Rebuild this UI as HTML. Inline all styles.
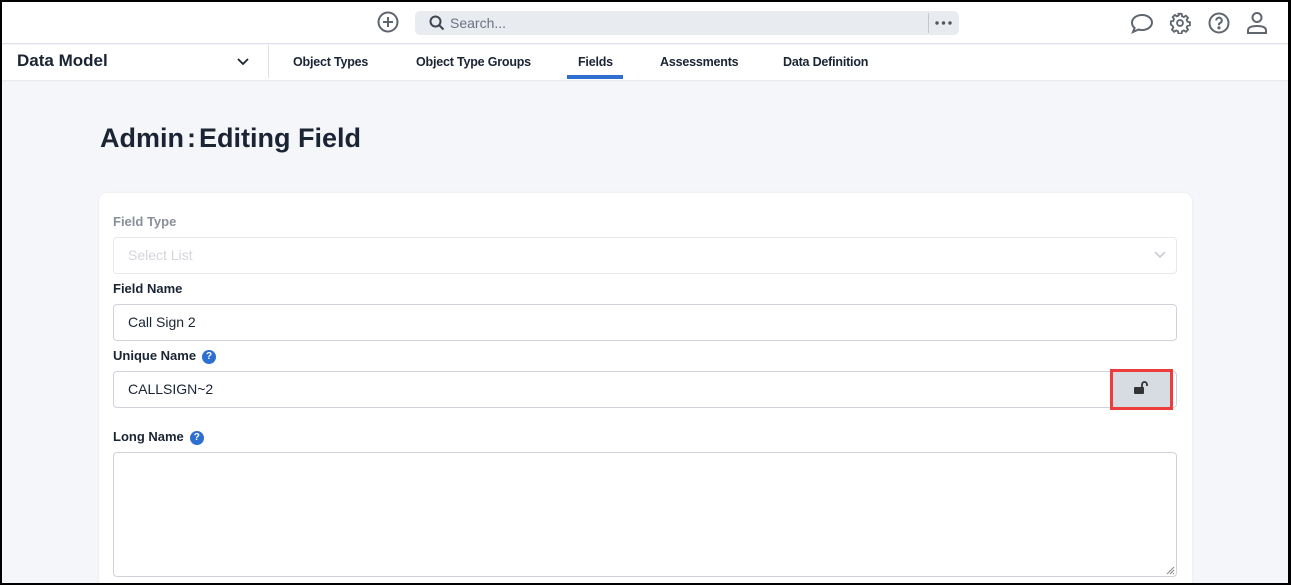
<!DOCTYPE html>
<html><head><style>
*{box-sizing:border-box;margin:0;padding:0}
body{width:1291px;height:585px;overflow:hidden;background:#000;font-family:"Liberation Sans",sans-serif;position:relative}
.frame{position:absolute;left:2px;top:2px;width:1286px;height:581px;background:#f5f6fa;overflow:hidden}
.top{position:absolute;left:0;top:0;width:100%;height:42px;background:#fff;border-bottom:1px solid #dfe1e5}
.search{position:absolute;left:413px;top:9px;width:544px;height:24px;background:#e8ebf0;border-radius:5px}
.search span{position:absolute;left:35px;top:4px;font-size:14px;color:#6b7280}
.nav{position:absolute;left:0;top:43px;width:100%;height:35px;background:#fff;box-shadow:0 1px 2px rgba(0,0,0,.06)}
.nav .t{position:absolute;top:10px;font-size:12.5px;font-weight:bold;color:#1a2433;letter-spacing:-.2px}
.card{position:absolute;left:97px;top:191px;width:1093px;height:400px;background:#fff;border-radius:8px;box-shadow:0 0 2px rgba(0,0,0,.08)}
.lbl{position:absolute;left:14px;font-size:13px;font-weight:bold;color:#1a2433}
.inp{position:absolute;left:14px;width:1064px;border:1px solid #cfd3d9;border-radius:4px;font-size:14px;color:#1a2433;padding-left:14px}
.q{display:inline-block;width:14px;height:14px;border-radius:50%;background:#2f6fd0;color:#fff;font-size:10px;text-align:center;line-height:14px;vertical-align:1px;margin-left:6px}
</style></head><body><div class="frame">
<div class="top">
<svg style="position:absolute;left:375px;top:9px" width="22" height="22" viewBox="0 0 22 22" fill="none" stroke="#5f6670" stroke-width="2"><circle cx="11" cy="11" r="9.5"/><path d="M11 6v10M6 11h10"/></svg>
<div class="search"><svg style="position:absolute;left:14px;top:4px" width="16" height="16" viewBox="0 0 16 16" fill="none" stroke="#3d4450" stroke-width="2"><circle cx="6.5" cy="6.5" r="5"/><path d="M10 10l4.5 4.5"/></svg><span>Search...</span>
<div style="position:absolute;left:513px;top:2px;width:1px;height:20px;background:#c4c8ce"></div>
<svg style="position:absolute;left:520px;top:10px" width="18" height="4" viewBox="0 0 18 4" fill="#555"><circle cx="2" cy="2" r="1.7"/><circle cx="8.5" cy="2" r="1.7"/><circle cx="15" cy="2" r="1.7"/></svg></div>
<svg style="position:absolute;left:1128px;top:11px" width="24" height="22" viewBox="0 0 24 22" fill="none" stroke="#5f6670" stroke-width="2"><path d="M12 2c5.5 0 10 3.4 10 7.5S17.5 17 12 17c-1.3 0-2.5-.2-3.6-.5L3 19l1.6-4C3 13.7 2 11.7 2 9.5 2 5.4 6.5 2 12 2z"/></svg>
<svg style="position:absolute;left:1167px;top:10px" width="22" height="22" viewBox="0 0 24 24" fill="none" stroke="#5f6670" stroke-width="2"><circle cx="12" cy="12" r="3.2"/><path d="M10.3 2h3.4l.5 2.6 2 .9 2.2-1.5 2.4 2.4-1.5 2.2.9 2 2.6.5v3.4l-2.6.5-.9 2 1.5 2.2-2.4 2.4-2.2-1.5-2 .9-.5 2.6h-3.4l-.5-2.6-2-.9-2.2 1.5-2.4-2.4 1.5-2.2-.9-2L2 13.7v-3.4l2.6-.5.9-2L4 5.6 6.4 3.2l2.2 1.5 2-.9z"/></svg>
<svg style="position:absolute;left:1206px;top:10px" width="22" height="22" viewBox="0 0 22 22" fill="none" stroke="#5f6670" stroke-width="2"><circle cx="11" cy="11" r="9.5"/><path d="M8.2 8.5a2.8 2.8 0 1 1 3.8 2.6c-.7.3-1 .8-1 1.5v.6"/><circle cx="11" cy="15.8" r=".6" fill="#5f6670"/></svg>
<svg style="position:absolute;left:1244px;top:9px" width="22" height="24" viewBox="0 0 22 24" fill="none" stroke="#5f6670" stroke-width="2"><circle cx="11" cy="6.5" r="4.5"/><path d="M2 22v-2.5C2 16.5 5 15 11 15s9 1.5 9 4.5V22z"/></svg>
</div>
<div class="nav">
<div style="position:absolute;left:15px;top:6px;font-size:17px;font-weight:bold;color:#1a2433">Data Model</div>
<svg style="position:absolute;left:234px;top:12px" width="14" height="10" viewBox="0 0 14 10" fill="none" stroke="#1a2433" stroke-width="1.8"><path d="M2 2l5 5 5-5"/></svg>
<div style="position:absolute;left:266px;top:0;width:1px;height:33px;background:#dfe1e5"></div>
<div class="t" style="left:291px">Object Types</div>
<div class="t" style="left:414px">Object Type Groups</div>
<div class="t" style="left:576px">Fields</div>
<div style="position:absolute;left:565px;top:30px;width:56px;height:4px;background:#2f6fd0"></div>
<div class="t" style="left:658px">Assessments</div>
<div class="t" style="left:781px">Data Definition</div>
</div>
<div style="position:absolute;left:98px;top:121px;font-size:27px;font-weight:bold;color:#1a2433">Admin<span style="margin:0 3px">:</span>Editing Field</div>
<div class="card">
<div class="lbl" style="top:21px;color:#8a9099">Field Type</div>
<div class="inp" style="top:44px;height:37px;border-color:#e6e8eb;color:#d3d6db;line-height:35px">Select List
<svg style="position:absolute;right:10px;top:13px" width="12" height="8" viewBox="0 0 12 8" fill="none" stroke="#c4c8ce" stroke-width="1.5"><path d="M1 1l5 5 5-5"/></svg></div>
<div class="lbl" style="top:88px">Field Name</div>
<div class="inp" style="top:111px;height:37px;line-height:35px">Call Sign 2</div>
<div class="lbl" style="top:155px">Unique Name<span class="q">?</span></div>
<div class="inp" style="top:178px;height:37px;line-height:35px">CALLSIGN~2</div>
<div style="position:absolute;left:1011px;top:176px;width:63px;height:41px;border:3px solid #ee3b3b;background:#d7dbe2"></div>
<svg style="position:absolute;left:1034px;top:187px" width="16" height="16" viewBox="0 0 16 16"><path d="M9 7V4.5a2.5 2.5 0 0 1 5 0V6" fill="none" stroke="#333" stroke-width="1.8"/><rect x="1" y="7" width="10" height="7" rx="1" fill="#333"/></svg>
<div class="lbl" style="top:236px">Long Name<span class="q">?</span></div>
<div class="inp" style="top:259px;height:125px"><svg style="position:absolute;right:1px;top:113px" width="9" height="9" viewBox="0 0 9 9" stroke="#888" stroke-width="1"><path d="M8 1L1 8M8 4L4 8M8 7L7 8"/></svg></div>
</div>
</div></body></html>
